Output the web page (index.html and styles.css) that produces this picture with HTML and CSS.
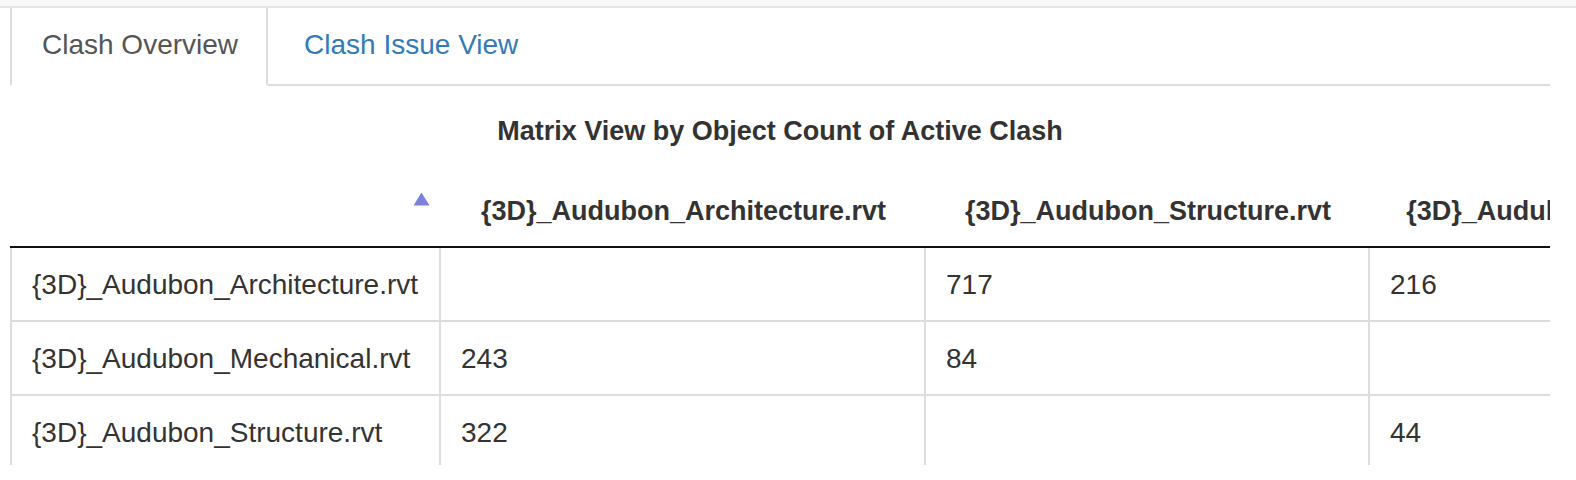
FILE: index.html
```html
<!DOCTYPE html>
<html lang="en">
<head>
  <meta charset="UTF-8" />
  <meta name="viewport" content="width=device-width, initial-scale=1.0"/>
  <title>Clash Overview</title>
  <link rel="stylesheet" href="styles.css">
</head>
<body>
  <div class="topbar"></div>

  <div class="page">
    <!-- Tabs -->
    <ul class="tabs">
      <li class="active"><a href="#overview">Clash Overview</a></li>
      <li><a href="#issues">Clash Issue View</a></li>
    </ul>

    <!-- Matrix -->
    <section class="matrix" id="overview">
      <div class="matrix-title">Matrix View by Object Count of Active Clash</div>
      <div class="matrix-scroll">
        <table class="matrix-table">
          <thead>
            <tr>
              <th class="c0 corner">
                <svg class="sort-icon" width="17" height="14" viewBox="0 0 17 14">
                  <polygon points="8.5,0.5 16.5,13.5 0.5,13.5" fill="#7c81dc"/>
                </svg>
              </th>
              <th class="c1">{3D}_Audubon_Architecture.rvt</th>
              <th class="c2">{3D}_Audubon_Structure.rvt</th>
              <th class="c3">{3D}_Audubon_Mechanical.rvt</th>
            </tr>
          </thead>
          <tbody>
            <tr>
              <td>{3D}_Audubon_Architecture.rvt</td>
              <td></td>
              <td>717</td>
              <td>216</td>
            </tr>
            <tr>
              <td>{3D}_Audubon_Mechanical.rvt</td>
              <td>243</td>
              <td>84</td>
              <td></td>
            </tr>
            <tr>
              <td>{3D}_Audubon_Structure.rvt</td>
              <td>322</td>
              <td></td>
              <td>44</td>
            </tr>
          </tbody>
        </table>
      </div>
    </section>
  </div>
</body>
</html>
```

FILE: styles.css
```css
body {
  margin: 0;
  font-family: "Liberation Sans", Arial, sans-serif;
  color: #333;
  background: #fff;
}

.topbar {
  height: 6px;
  background: #f8f8f8;
  border-bottom: 2px solid #e6e6e6;
}

.page {
  margin-left: 10px;
  width: 1540px;
  overflow: hidden;
}

/* tabs */
.tabs {
  list-style: none;
  margin: 0;
  padding: 0;
  display: flex;
  border-bottom: 2px solid #ddd;
}

.tabs li {
  margin-right: 4px;
  margin-bottom: -2px;
}

.tabs a {
  display: block;
  padding: 17px 28px 19px 30px;
  font-size: 28px;
  line-height: 40px;
  color: #337ab7;
  text-decoration: none;
  border: 2px solid transparent;
  border-top: 0;
}

.tabs .active a {
  color: #555;
  background: #fff;
  border-color: #ddd;
  border-bottom-color: transparent;
}

/* matrix */
.matrix-title {
  text-align: center;
  font-size: 27px;
  font-weight: bold;
  line-height: 40px;
  padding: 25px 0 17px;
}

.matrix-scroll {
  height: 297px;
  overflow: hidden;
}

.matrix-table {
  table-layout: fixed;
  width: 1824px;
  border-collapse: separate;
  border-spacing: 0;
  font-size: 28px;
  line-height: 40px;
}

.matrix-table th {
  box-sizing: border-box;
  padding: 23px 36px 15px;
  border-bottom: 2px solid #111;
  font-size: 27px;
  font-weight: bold;
  text-align: center;
  vertical-align: top;
  white-space: nowrap;
}

.matrix-table .c0 { width: 431px; }
.matrix-table .c1 { width: 485px; }
.matrix-table .c2 { width: 444px; }
.matrix-table .c3 { width: 464px; }

.matrix-table th.corner {
  padding-right: 11px;
}

.sort-icon {
  display: block;
  margin: 1px 0 0 auto;
}

.matrix-table td {
  padding: 17px 20px 15px;
  border-right: 2px solid #ddd;
  border-bottom: 2px solid #ddd;
  white-space: nowrap;
  overflow: hidden;
}

.matrix-table td:first-child {
  border-left: 2px solid #ddd;
}
```
